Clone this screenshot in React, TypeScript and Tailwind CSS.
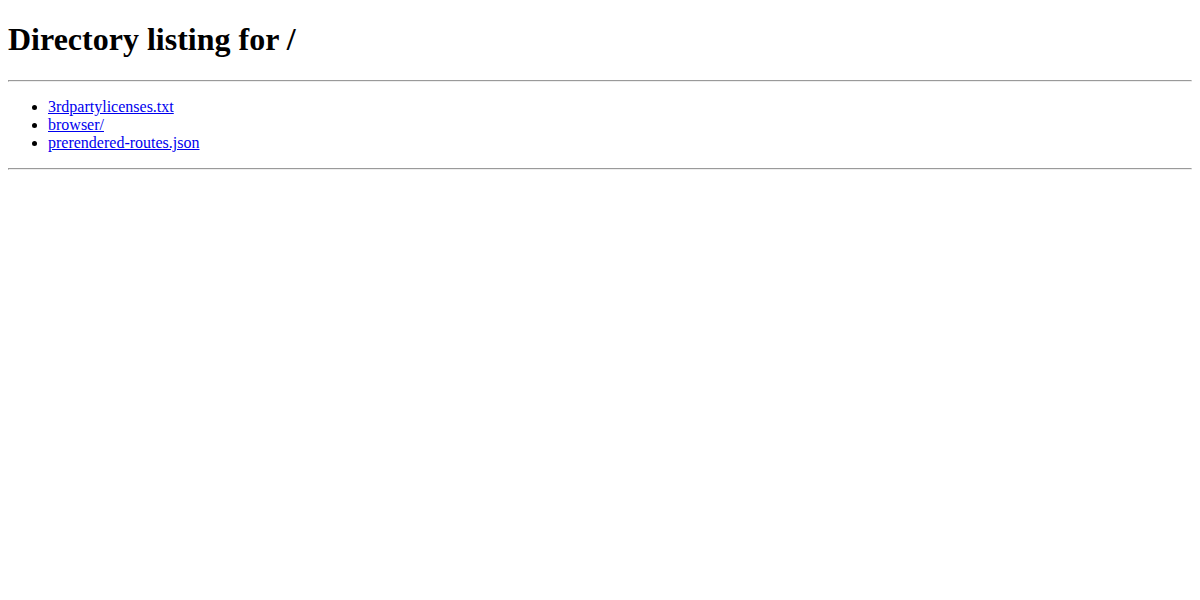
export default function App() {
  const items = ["3rdpartylicenses.txt", "browser/", "prerendered-routes.json"];
  return (
    <div className="px-2 pb-2 bg-white text-black min-h-[600px]" style={{ fontFamily: '"Liberation Serif", "Times New Roman", serif' }}>
      <div className="h-[21.44px]" />
      <h1 className="text-[32px] font-bold leading-[normal] m-0">Directory listing for /</h1>
      <div className="h-[21.44px]" />
      <hr className="h-[2px] border-t border-b border-l border-r border-t-[#9a9a9a] border-l-[#9a9a9a] border-b-[#eeeeee] border-r-[#eeeeee]" />
      <ul className="list-disc pl-10 my-4 text-base leading-[normal]">
        {items.map((n) => (
          <li key={n}>
            <a href={n} className="text-[#0000ee] underline">{n}</a>
          </li>
        ))}
      </ul>
      <hr className="h-[2px] border-t border-b border-l border-r border-t-[#9a9a9a] border-l-[#9a9a9a] border-b-[#eeeeee] border-r-[#eeeeee]" />
    </div>
  );
}
